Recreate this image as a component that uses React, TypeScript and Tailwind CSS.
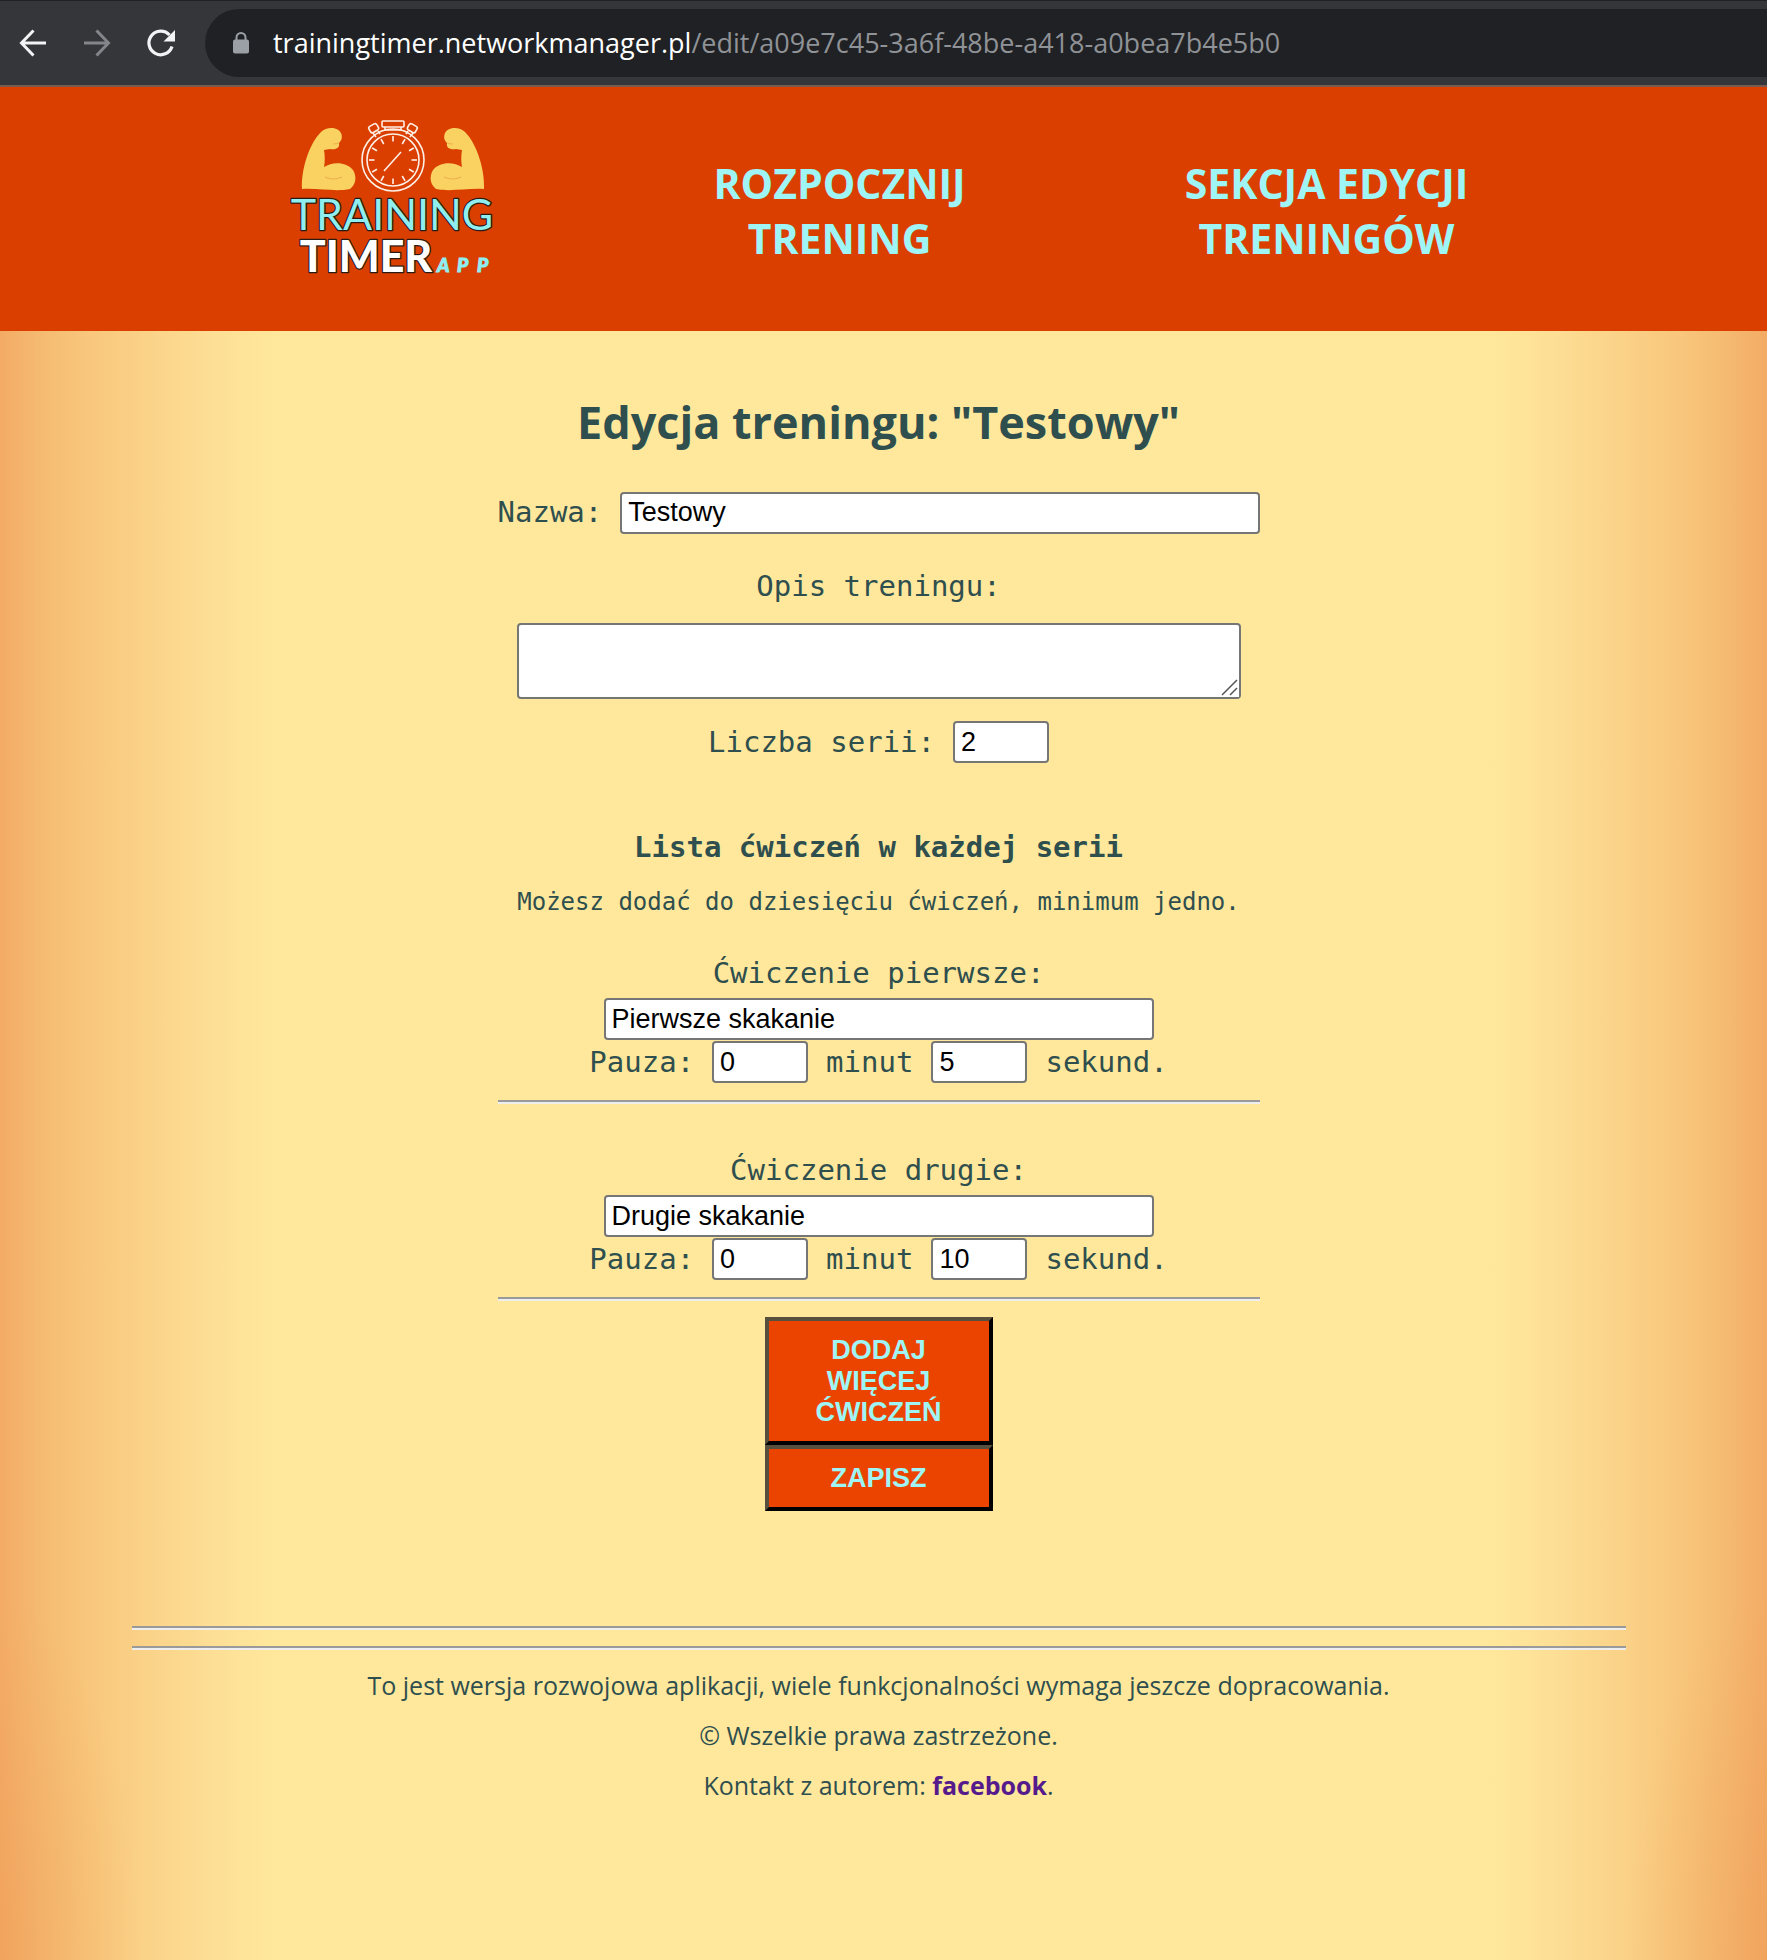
import React from "react";

const sans = "font-['Open_Sans','Noto_Sans',sans-serif]";
const mono = "font-['DejaVu_Sans_Mono',monospace]";
const field =
  "h-[42px] rounded-[4px] border-2 border-[#767676] bg-white px-1.5 font-['Liberation_Sans',Arial,sans-serif] text-[27px] leading-8 text-black outline-none";
const rule = "h-1 w-full border-t-2 border-b-2 border-t-[#9a9a9a] border-b-[#eeeeee]";
const action =
  "w-full border-4 border-t-[#58503f] border-l-[#58503f] border-r-black border-b-black bg-[#eb4400] px-10 font-['Liberation_Sans',Arial,sans-serif] text-[27px] leading-[31px] font-bold text-[#9ff5f5] uppercase";

function BrowserBar() {
  return (
    <div className="flex h-[87px] items-center border-t border-b-2 border-t-[#202124] border-b-[#7a5a4c] bg-[#35363a] pl-4">
      <button aria-label="Wstecz" className="flex w-16">
        <svg width="34" height="34" viewBox="0 0 34 34" fill="none" stroke="#f1f3f4" strokeWidth="3">
          <path d="M30 17H6M17.500 4.500 5.500 17l12 12.500" />
        </svg>
      </button>
      <button aria-label="Dalej" className="flex w-16">
        <svg width="34" height="34" viewBox="0 0 34 34" fill="none" stroke="#84858a" strokeWidth="3">
          <path d="M4 17h24M16.500 4.500 28.500 17l-12 12.500" />
        </svg>
      </button>
      <button aria-label="Odśwież" className="flex w-[61px]">
        <svg width="34" height="34" viewBox="0 0 34 34">
          <path d="M28 20.500A11.800 11.800 0 1 1 25.500 9" fill="none" stroke="#f1f3f4" strokeWidth="3.200" />
          <path d="M31 4v11.500H19.500z" fill="#f1f3f4" />
        </svg>
      </button>
      <div className="flex h-[68px] flex-1 items-center rounded-l-full bg-[#202124] pl-7">
        <svg width="16" height="22" viewBox="0 0 16 22" className="shrink-0">
          <path d="M3.500 9V5.500a4.500 4.500 0 0 1 9 0V9" fill="none" stroke="#9aa0a6" strokeWidth="2" />
          <rect x="0" y="7.500" width="16" height="14" rx="2" fill="#9aa0a6" />
        </svg>
        <span className={`${sans} ml-6 text-[27px] whitespace-nowrap text-[#8f9296]`}>
          <span className="text-white">trainingtimer.networkmanager.pl</span>
          /edit/a09e7c45-3a6f-48be-a418-a0bea7b4e5b0
        </span>
      </div>
    </div>
  );
}

function Arm() {
  return (
    <>
      <path
        d="M31 89C30 70 38 44 50 32C56 26 67 27 70 33C72 38 70 41 68 43C69 48 65 50 59 49L53 50C54 56 54 62 53 67C62 61 76 62 82 70C86 77 85 84 79 89C65 92 48 88 31 89Z"
        fill="#f9d262"
      />
      <path d="M54 77q8 4 17 0M62 44q3 0 6-1" fill="none" stroke="#eeb04f" strokeWidth="1.200" />
    </>
  );
}

function Logo() {
  const ticks = Array.from({ length: 12 }, (_, i) => i * 30);
  return (
    <svg width="208" height="160" viewBox="18 20 208 160" role="img" aria-label="Training Timer App">
      <Arm />
      <g transform="translate(244 0) scale(-1 1)">
        <Arm />
      </g>
      <g fill="none" stroke="#fff0e6" strokeWidth="1.600">
        <circle cx="122" cy="60" r="31" />
        <circle cx="122" cy="60" r="26" />
        <rect x="111" y="21" width="22" height="6" rx="1" />
        <path d="M114 27v3h16v-3" />
        <rect x="98" y="25" width="9" height="7" rx="2" transform="rotate(-30 102 28)" />
        <rect x="137" y="25" width="9" height="7" rx="2" transform="rotate(30 142 28)" />
        <path d="M102 33l3 4M107 31l2 3M142 33l-3 4M137 31l-2 3M113 71l17-19" />
        {ticks.map((a) => (
          <path key={a} d="M122 36v5.500" transform={`rotate(${a} 122 60)`} />
        ))}
      </g>
      <g stroke="#2b1a14" strokeWidth="2.500" paintOrder="stroke" strokeLinejoin="round">
        <text x="121" y="130" textAnchor="middle" fontFamily="Lato, sans-serif" fontWeight="400" fontSize="43" fill="#8feef0">
          TRAINING
        </text>
        <text x="95" y="172" textAnchor="middle" fontFamily="Lato, sans-serif" fontWeight="900" fontSize="43" fill="#ffffff">
          TIMER
        </text>
      </g>
      <g fontFamily="Lato, sans-serif" fontWeight="900" fontStyle="italic" fontSize="19" fill="#8feef0" stroke="#8feef0" strokeWidth="1">
        <text x="166" y="172">A</text>
        <text x="186" y="172">P</text>
        <text x="206" y="172">P</text>
      </g>
    </svg>
  );
}

function Header() {
  return (
    <header className={`${sans} flex h-[244px] justify-center gap-[217px] bg-[#da3f00] pr-2 text-[41px] leading-[55px] font-bold text-[#9ff5f5]`}>
      <a href="#" className="mt-[33px] h-40">
        <Logo />
      </a>
      <a href="#" className="mt-[69px] w-[252px] text-center">
        ROZPOCZNIJ TRENING
      </a>
      <a href="#" className="mt-[69px] w-[288px] text-center">
        SEKCJA EDYCJI TRENINGÓW
      </a>
    </header>
  );
}

function Exercise({ title, name, minutes, seconds }: { title: string; name: string; minutes: string; seconds: string }) {
  return (
    <section>
      <label className="flex flex-col items-center">
        <span className="leading-[42px]">{title}</span>
        <input className={`${field} mt-1 w-[550px]`} defaultValue={name} />
      </label>
      <div className="mt-px flex items-center justify-center gap-[18px] leading-[42px]">
        <span>Pauza:</span>
        <input aria-label="Minuty" className={`${field} w-24`} defaultValue={minutes} />
        <span>minut</span>
        <input aria-label="Sekundy" className={`${field} w-24`} defaultValue={seconds} />
        <span>sekund.</span>
      </div>
      <hr className={`${rule} mt-[17px]`} />
    </section>
  );
}

export default function App() {
  return (
    <div className="flex min-h-screen flex-col bg-[#ffe89b]">
      <BrowserBar />
      <Header />
      <div className="flex-1 bg-[radial-gradient(ellipse_140px_360px_at_0_100%,#ee985066,#ee985000),radial-gradient(ellipse_140px_360px_at_100%_100%,#ee985066,#ee985000),linear-gradient(90deg,#f3ab65_0,#f5ba72_40px,#f8c67c_85px,#fad389_150px,#fde096_220px,#ffe89b_280px,#ffe89b_calc(100%-280px),#fde096_calc(100%-220px),#fad389_calc(100%-150px),#f8c67c_calc(100%-85px),#f5ba72_calc(100%-40px),#f3ab65_100%)] pr-2.5 pb-36 text-[#2f4f4f]">
        <main className="mx-auto w-[762px] max-w-full">
          <h1 className={`${sans} pt-[59px] text-center text-[45px] leading-[64px] font-bold`}>Edycja treningu: "Testowy"</h1>
          <form className={`${mono} mt-[37px] flex flex-col text-[29px]`} onSubmit={(e) => e.preventDefault()}>
            <label className="flex items-center gap-[18px]">
              Nazwa:
              <input className={`${field} min-w-0 flex-1`} defaultValue="Testowy" />
            </label>
            <label className="mt-[30px] flex flex-col items-center">
              <span className="leading-[42px]">Opis treningu:</span>
              <span className="relative mt-4 flex">
                <textarea className={`${field} h-[76px] w-[724px] resize`} />
                <svg width="18" height="18" viewBox="0 0 18 18" className="pointer-events-none absolute right-0.5 bottom-0.5 bg-white">
                  <path d="M1 16 16 1M9 16l7-7" stroke="#555555" strokeWidth="1.500" />
                </svg>
              </span>
            </label>
            <label className="mt-[22px] flex items-center justify-center gap-[18px]">
              Liczba serii:
              <input className={`${field} w-24`} defaultValue="2" />
            </label>
            <h2 className="mt-[62px] text-center leading-[42px] font-bold">Lista ćwiczeń w każdej serii</h2>
            <p className="mt-4 text-center text-[24px] leading-9 whitespace-nowrap">Możesz dodać do dziesięciu ćwiczeń, minimum jedno.</p>
            <div className="mt-8 flex flex-col gap-[45px]">
              <Exercise title="Ćwiczenie pierwsze:" name="Pierwsze skakanie" minutes="0" seconds="5" />
              <Exercise title="Ćwiczenie drugie:" name="Drugie skakanie" minutes="0" seconds="10" />
            </div>
            <div className="mt-4 w-[228px] self-center">
              <button type="button" className={`${action} h-32`}>
                Dodaj więcej ćwiczeń
              </button>
              <button type="submit" className={`${action} h-[66px]`}>
                Zapisz
              </button>
            </div>
          </form>
        </main>
        <footer className={`${sans} mx-auto mt-[115px] w-[1494px] max-w-full text-center text-[25px] leading-9`}>
          <hr className={rule} />
          <hr className={`${rule} mt-4`} />
          <p className="mt-[17px]">To jest wersja rozwojowa aplikacji, wiele funkcjonalności wymaga jeszcze dopracowania.</p>
          <p className="mt-[14px]">© Wszelkie prawa zastrzeżone.</p>
          <p className="mt-[14px]">
            Kontakt z autorem:{" "}
            <a href="#" className="font-bold text-[#551a8b]">
              facebook
            </a>
            .
          </p>
        </footer>
      </div>
    </div>
  );
}
